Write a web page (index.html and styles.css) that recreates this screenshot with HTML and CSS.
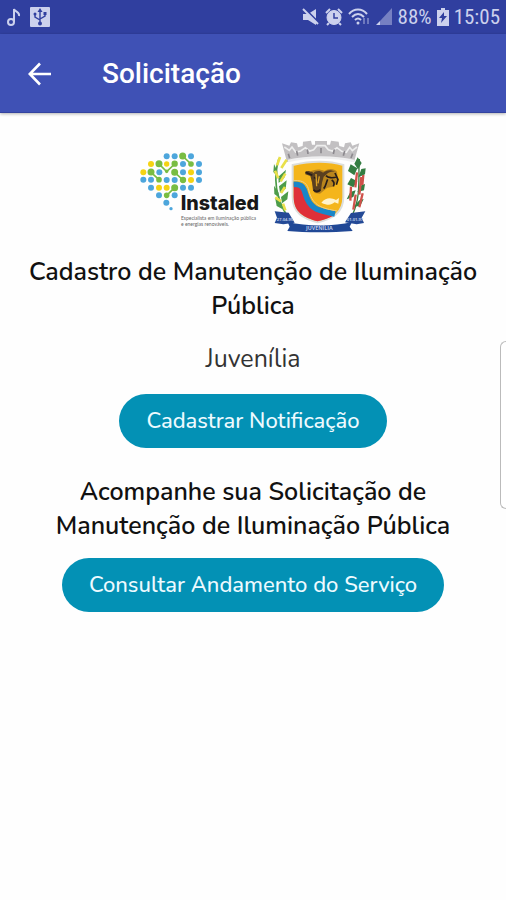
FILE: index.html
```html
<!DOCTYPE html>
<html lang="pt-BR">
<head>
    <meta charset="UTF-8">
    <meta name="viewport" content="width=device-width, initial-scale=1.0">
    <title>Solicitação</title>
    <link rel="stylesheet" href="styles.css">
</head>
<body>
<div class="status-bar">
    <div class="status-left">
        <svg width="16" height="20" viewBox="0 0 16 20" fill="none" stroke="currentColor" stroke-width="2">
            <circle cx="5" cy="15" r="3"/>
            <path d="M8 15V2c1 3 6 3 5 7"/>
        </svg>
        <svg width="20" height="20" viewBox="0 0 20 20">
            <rect width="20" height="20" rx="1" fill="currentColor"/>
            <path d="M10 16V4M10 13L5 10V7M10 12l5-3V6" fill="none" stroke="#303f9f" stroke-width="1.4"/>
            <path d="M10 1l2.500 4h-5z" fill="#303f9f"/>
            <circle cx="10" cy="16.500" r="2" fill="#303f9f"/>
            <circle cx="5" cy="7" r="1.500" fill="#303f9f"/>
            <rect x="13.500" y="5" width="3" height="3" fill="#303f9f"/>
        </svg>
    </div>
    <div class="status-right">
        <svg width="18" height="18" viewBox="0 0 18 18">
            <path d="M1 6h5l8-5v16l-8-5H1z" fill="currentColor"/>
            <path d="M2 0l16 16" stroke="#303f9f" stroke-width="2"/>
            <path d="M1 1l15 15" stroke="currentColor" stroke-width="2"/>
        </svg>
        <svg width="18" height="18" viewBox="0 0 18 18" stroke="currentColor">
            <path d="M1 5l4-4M17 5l-4-4M4 15l-2 2M14 15l2 2" stroke-width="2"/>
            <circle cx="9" cy="9.500" r="7" fill="currentColor"/>
            <path d="M9 5v5h4" fill="none" stroke="#303f9f" stroke-width="1.500"/>
        </svg>
        <svg width="22" height="18" viewBox="0 0 22 18" fill="none" stroke="currentColor" stroke-width="2">
            <path d="M1 6c5-6 13-6 18 0M4 9c4-4 8-4 12 0M7 12c2-2 4-2 6 0"/>
            <circle cx="10" cy="15" r="1.500" fill="currentColor" stroke="none"/>
            <path d="M16 10v6M20 10v6" opacity=".4"/>
        </svg>
        <svg width="18" height="18" viewBox="0 0 18 18" fill="currentColor">
            <path d="M17 0v17H5V13z" opacity=".45"/>
            <path d="M5 13v4H1z"/>
        </svg>
        <span>88%</span>
        <svg width="12" height="18" viewBox="0 0 12 18">
            <path d="M4 0h4v2h4v16H0V2h4z" fill="currentColor"/>
            <path d="M7 4l-5 6h3l-1 5 6-7H7z" fill="#303f9f"/>
        </svg>
        <span>15:05</span>
    </div>
</div>
<header class="app-bar">
    <button type="button" class="back" aria-label="Voltar">
        <svg width="24" height="24" viewBox="0 0 24 24" fill="none" stroke="currentColor" stroke-width="2.600">
            <path d="M23 12H2M12 1.500L1.800 12 12 22.500"/>
        </svg>
    </button>
    <h1>Solicitação</h1>
</header>
<main class="content">
    <div class="logos">
        <!-- Instaled -->
        <svg class="logo" width="135" height="110" viewBox="0 0 405 330">
            <g fill="#4da6dc">
                <circle cx="107" cy="79" r="9"/><circle cx="131" cy="79" r="9"/><circle cx="180" cy="79" r="9"/>
                <circle cx="156" cy="102" r="9"/><circle cx="204" cy="102" r="9"/>
                <circle cx="85" cy="127" r="9"/><circle cx="156" cy="127" r="9"/><circle cx="204" cy="127" r="9"/>
                <circle cx="37" cy="149" r="9"/><circle cx="60" cy="149" r="9"/><circle cx="107" cy="150" r="9"/><circle cx="131" cy="150" r="9"/><circle cx="204" cy="150" r="9"/>
                <circle cx="60" cy="173" r="9"/><circle cx="156" cy="173" r="9"/><circle cx="180" cy="173" r="9"/>
                <circle cx="84" cy="196" r="9"/><circle cx="131" cy="196" r="9"/>
                <circle cx="106" cy="218" r="9"/><circle cx="120" cy="236" r="5"/>
            </g>
            <g fill="#f5d313">
                <circle cx="60" cy="102" r="9"/><circle cx="107" cy="102" r="8"/><circle cx="37" cy="127" r="9"/>
                <circle cx="180" cy="127" r="9"/><circle cx="180" cy="150" r="9"/>
                <circle cx="84" cy="173" r="9"/><circle cx="107" cy="173" r="9"/>
            </g>
            <g fill="#79bd43" stroke="#79bd43" stroke-width="5">
                <path d="M84 102l23 23 24-23M156 79l24 23M60 127l24 22M131 127l25 23M107 196l24-23" fill="none"/>
                <circle cx="84" cy="101" r="8"/><circle cx="131" cy="101" r="7"/><circle cx="107" cy="124" r="3"/>
                <circle cx="155" cy="78" r="8"/><circle cx="180" cy="102" r="6"/>
                <circle cx="60" cy="126" r="8"/><circle cx="84" cy="149" r="6"/>
                <circle cx="131" cy="127" r="8"/><circle cx="156" cy="150" r="7"/>
                <circle cx="131" cy="173" r="8"/><circle cx="107" cy="196" r="6"/>
            </g>
            <text class="logo-name" x="149" y="241">Instaled</text>
            <text class="logo-tag" x="150" y="271">Especialista em iluminação pública</text>
            <text class="logo-tag" x="150" y="289">e energias renováveis.</text>
        </svg>
        <!-- Brasão de Juvenília -->
        <svg class="logo" width="110" height="110" viewBox="0 0 330 330">
            <path d="M63 96L48 40l22 7 5-10 18 3 3 12 14-4 1-13 24-3 3 12h9V33h36v11h9l3-12 23 3 2 13 14 4 3-12 17-3 5 10 21-7-16 56C207 78 123 78 63 96z" fill="#c2c0c2"/>
            <path d="M55 51l15 10 8-10 11 15 15-3 14-10 13 10 12-4 10-12 24 0 10 12 12 4 14-10 14 11 14 3 10-15 8 10 14-11" fill="none" stroke="#eee" stroke-width="5"/>
            <path d="M71 85l-4-14M95 77l-3-14M126 72l-2-14M165 70V54M202 72l3-14M232 77l4-14M255 84l5-13" stroke="#8c898e" stroke-width="5"/>
            <path d="M66 93C123 79 207 79 264 93" fill="none" stroke="#efeff0" stroke-width="8"/>
            <!-- ramos -->
            <path d="M39 85c-17 55-11 116 25 174" fill="none" stroke="#4b9b45" stroke-width="5"/>
            <g fill="#4d9c4a">
                <path d="M37 140l23-21-5 24-17 16zM39 169l23-18-3 25-17 12zM45 201l22-17-3 24-16 12zM34 122L24 102l-2 24 14 16zM37 187l-13-20 1 25 16 12zM45 220l-18-18 5 26 18 10z"/>
            </g>
            <path d="M42 81l-9 25M62 89l-16 25M27 122l10 23M58 131l-14 23M28 202l17 12M57 171l-12 18M51 221l7 20" stroke="#e9e04a" stroke-width="8"/>
            <path d="M280 87c-4 55 6 110-20 166" fill="none" stroke="#377c3c" stroke-width="4"/>
            <path d="M275 82l-10 19 11 17 11-19zM254 103l-8 20 19 13 9-21zM286 117l-9 25 20-9 2-18zM255 144l-11 19 18 9 12-18zM286 166l-12 20 20-5 3-19zM253 186l-11 22 20-7 7-20zM280 211l-18 20 21-4 10-20z" fill="#347d42"/>
            <path d="M273 127l-5 45M286 141l-6 53M255 170l-2 42M290 190l-10 42M269 194l-7 45M292 135l-3 30" stroke="#cf514a" stroke-width="7"/>
            <!-- faixas -->
            <path d="M26 244l42 4 18 30-34 5-26-4 7-16zM298 244l-43 5-18 28 35 6 22-4-7-16z" fill="#244a96"/>
            <path d="M65 276c57 14 139 14 193 0l-7 14 9 13c-63 5-141 5-196 0l7-13z" fill="#204896"/>
            <!-- escudo -->
            <path d="M80 105q85-20 152 0v96c0 48-32 64-77 76-43-12-75-28-75-76z" fill="#f4b51b" stroke="#dcdedc" stroke-width="6"/>
            <path d="M83 160c26-2 31 10 37 31 13 44 35 54 82 66-14 8-30 13-47 17-39-12-72-25-72-74z" fill="#df3039"/>
            <path d="M83 163c27-2 32 14 36 30 14 48 43 48 88 59" fill="none" stroke="#1986c8" stroke-width="17"/>
            <path d="M83 152c31-3 42 11 46 31 12 46 40 52 85 60" fill="none" stroke="#efcf87" stroke-width="3"/>
            <!-- boi -->
            <path d="M135 123c14-6 28-6 40 0 12-9 30-8 38 2l3 25-14 20-18 3-22 18-16-2-9-35z" fill="#b9851d"/>
            <path d="M118 125c9-4 20 0 25 5 2-8 21-10 28-2 9-9 25-10 37-3-12-1-20 2-26 8l-9 7-5 18-3 22c-3 11-20 11-24 1l-3-25-5-18-15-5z" fill="#5a4020"/>
            <path d="M119 127l20 9M144 142l8 5M143 179c5 7 14 7 20 0M180 137c6 7 21 8 32 3M185 148c-5 10-4 19-12 28M197 150c8 5 9 11 5 19M207 129l9 20-5 15" fill="none" stroke="#261d19" stroke-width="5"/>
            <path d="M150 132l2 37M160 139l-4 21" stroke="#dca126" stroke-width="4"/>
            <path d="M166 218c15-17 30-15 44-8l9-6-2 17-11-4c-12 10-22 9-40 1z" fill="#fff3cc"/>
            <text class="crest-small" x="57" y="273" text-anchor="middle">27-04-95</text>
            <text class="crest-small" x="267" y="273" text-anchor="middle">01-01-97</text>
            <text class="crest-name" x="160" y="301" text-anchor="middle">JUVENÍLIA</text>
        </svg>
    </div>
    <h2>Cadastro de Manutenção de Iluminação Pública</h2>
    <p class="city">Juvenília</p>
    <button type="button" class="btn">Cadastrar Notificação</button>
    <h2 class="follow">Acompanhe sua Solicitação de Manutenção de Iluminação Pública</h2>
    <button type="button" class="btn">Consultar Andamento do Serviço</button>
</main>
<div class="edge-handle"></div>
</body>
</html>
```
FILE: styles.css
```css
* {
    box-sizing: border-box;
}

body {
    margin: 0;
    background-color: #fefefe;
    color: #111;
    font-family: Nunito, "Open Sans", sans-serif;
}

.status-bar {
    display: flex;
    justify-content: space-between;
    align-items: center;
    height: 34px;
    padding: 0 6px;
    background-color: #303f9f;
    color: #ccd1ed;
    font-family: "Roboto Condensed", Roboto, sans-serif;
    font-size: 21px;
}

.status-left,
.status-right {
    display: flex;
    align-items: center;
    gap: 5px;
}

.status-left {
    gap: 8px;
}

.app-bar {
    display: flex;
    align-items: center;
    gap: 50px;
    height: 79px;
    padding: 1px 28px 0;
    background-color: #3f51b5;
    border-bottom: 1px solid #34439f;
    box-shadow: 0 1px 3px rgba(0, 0, 0, 0.3);
    color: white;
}

.app-bar h1 {
    margin: 0;
    font-family: Roboto, sans-serif;
    font-size: 28px;
    font-weight: 500;
}

.back {
    display: flex;
    padding: 0;
    border: none;
    background: none;
    color: white;
    cursor: pointer;
}

.content {
    display: flex;
    flex-direction: column;
    align-items: center;
    padding: 17px 24px;
    text-align: center;
}

.logos {
    display: flex;
    justify-content: center;
    margin-bottom: 15px;
}

.logo {
    display: block;
}

.logo-name {
    font-family: Inter, sans-serif;
    font-size: 59px;
    font-weight: 800;
    fill: #181818;
}

.logo-tag {
    font-family: Lato, sans-serif;
    font-size: 15px;
    fill: #666;
}

.crest-small,
.crest-name {
    font-family: "Open Sans", sans-serif;
    font-size: 12px;
    font-weight: 700;
    fill: #b9c6e6;
}

.crest-name {
    font-size: 16px;
}

h2 {
    margin: 0;
    font-size: 25px;
    font-weight: 600;
    line-height: 34px;
}

.city {
    margin: 19px 0 18px;
    font-size: 25px;
    line-height: 34px;
    color: #333;
}

.btn {
    height: 54px;
    padding: 0 27px;
    border: none;
    border-radius: 27px;
    background-color: #0391b5;
    color: #edfaff;
    font-family: inherit;
    font-size: 22px;
    font-weight: 500;
    cursor: pointer;
}

.follow {
    margin: 27px 0 15px;
}

/* painel lateral recolhido na borda da tela */
.edge-handle {
    position: absolute;
    top: 341px;
    right: 0;
    width: 6px;
    height: 168px;
    border: 1px solid #bbb;
    border-right: none;
    border-radius: 6px 0 0 6px;
    background-color: white;
}
```
